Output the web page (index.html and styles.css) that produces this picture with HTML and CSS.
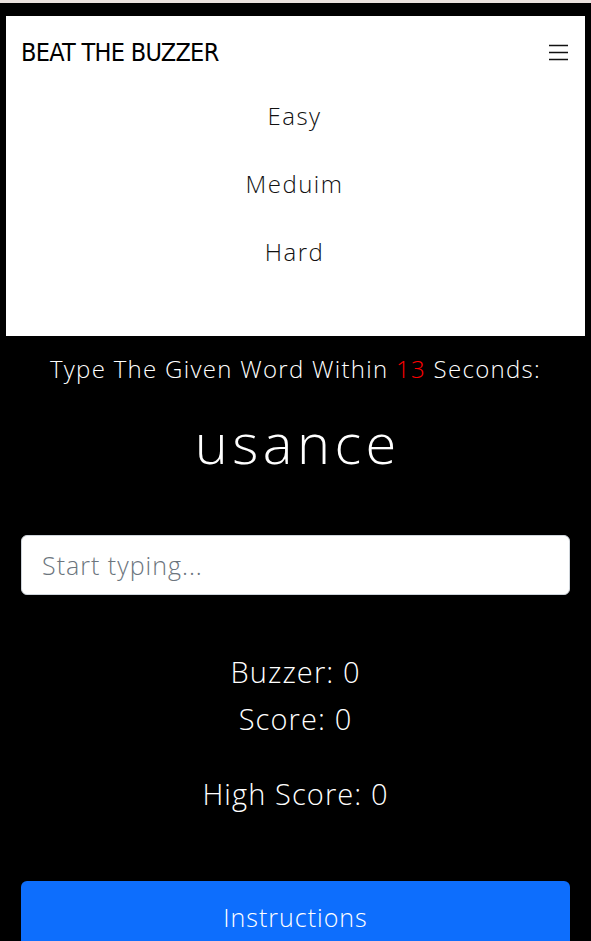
FILE: index.html
```html
<!DOCTYPE html>
<html lang="en">
<head>
<meta charset="utf-8">
<title>Beat The Buzzer</title>
<link rel="stylesheet" href="styles.css">
</head>
<body>
<div class="topbar"></div>
<div class="page">
  <nav class="nav">
    <div class="nav-row">
      <span class="brand">BEAT THE BUZZER</span>
      <svg class="burger" width="20" height="18" viewBox="0 0 20 18" aria-hidden="true">
        <path d="M1 2.5H20M1 9.5H20M1 16.5H20" stroke="#111" stroke-width="1.6" fill="none"/>
      </svg>
    </div>
    <ul class="menu">
      <li>Easy</li>
      <li>Meduim</li>
      <li>Hard</li>
    </ul>
  </nav>
</div>
<main class="game">
  <p class="prompt">Type The Given Word Within <span class="secs">13</span> Seconds:</p>
  <h1 class="word">usance</h1>
  <input class="field" type="text" placeholder="Start typing...">
  <div class="stats">
    <p class="stat">Buzzer: 0</p>
    <p class="stat">Score: 0</p>
    <p class="stat high">High Score: 0</p>
  </div>
  <button class="btn">Instructions</button>
</main>
</body>
</html>
```
FILE: styles.css
```css
html, body {
  margin: 0;
  padding: 0;
  background: #000;
}
body {
  font-family: "Open Sans", "Noto Sans", sans-serif;
  font-weight: 300;
  color: #fff;
}
.topbar {
  height: 3px;
  background: #e9e1dd;
}
.page {
  padding: 13px 6px 0;
}
.nav {
  background: #fff;
  height: 320px;
  box-sizing: border-box;
  padding: 20px 17px 0 15px;
  color: #111;
}
.nav-row {
  display: flex;
  align-items: center;
  justify-content: space-between;
  height: 32px;
}
.brand {
  font-family: "DejaVu Sans Condensed", "DejaVu Sans", sans-serif;
  font-stretch: condensed;
  font-weight: 400;
  font-size: 25px;
  color: #000;
  letter-spacing: -0.7px;
}
.burger {
  display: block;
}
.menu {
  list-style: none;
  margin: 14px 0 0;
  padding: 0;
  text-align: center;
}
.menu li {
  font-size: 24px;
  line-height: 36px;
  padding: 16px 0;
  letter-spacing: 1.5px;
}
.game {
  padding: 0 21px;
  text-align: center;
}
.prompt {
  margin: 15px 0 0;
  font-size: 24px;
  line-height: 36px;
  letter-spacing: 1.3px;
}
.secs {
  color: #ff0000;
}
.word {
  margin: 24px 0 0;
  font-size: 56px;
  font-weight: 300;
  line-height: 62px;
  letter-spacing: 4.5px;
  text-indent: 4.5px;
}
.field {
  display: block;
  box-sizing: border-box;
  width: 100%;
  height: 60px;
  margin: 62px 0 0;
  padding: 0 20px;
  border: 1px solid #ced4da;
  border-radius: 6px;
  background: #fff;
  font-family: inherit;
  font-weight: 300;
  font-size: 25px;
  letter-spacing: 1px;
  color: #212529;
}
.field::placeholder {
  color: #6c757d;
}
.stats {
  margin-top: 53px;
}
.stat {
  margin: 0;
  font-size: 29px;
  line-height: 47px;
  letter-spacing: 1.1px;
}
.stat.high {
  margin-top: 28px;
}
.btn {
  display: block;
  width: 100%;
  height: 72px;
  margin-top: 64px;
  border: 0;
  border-radius: 6px;
  background: #0d6efd;
  color: #fff;
  font-family: inherit;
  font-weight: 300;
  font-size: 25px;
  letter-spacing: 1px;
}
```
